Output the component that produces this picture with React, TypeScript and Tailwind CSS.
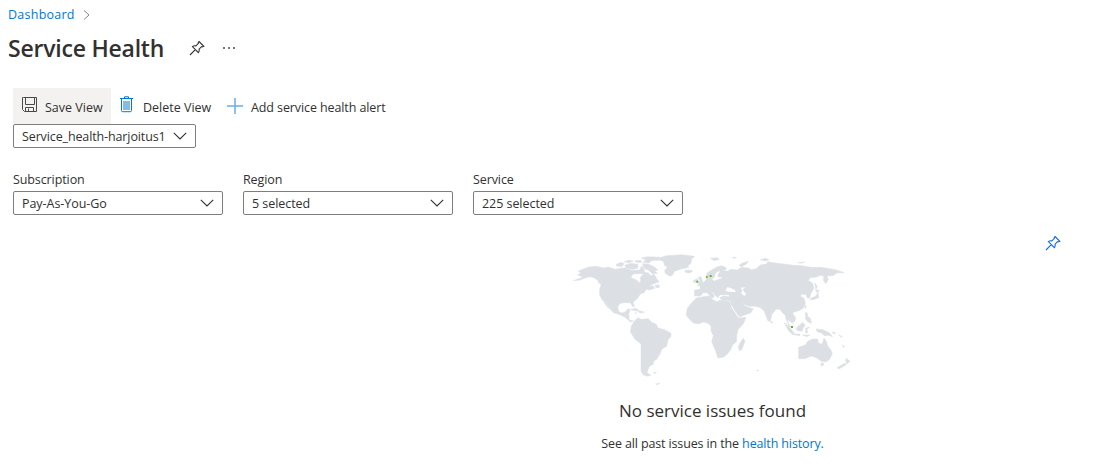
import type { ReactNode } from 'react';

function PinIcon({ className }: { className: string }) {
  return (
    <svg viewBox="0 0 16 16" className={className} fill="none" stroke="currentColor" strokeWidth="1.1">
      <path d="M10 1.5 14.8 6.3 13.4 6.9 12.6 6.6 10.1 9.1C10.5 10.5 10.2 11.7 9.4 12.6L3.4 6.6C4.3 5.8 5.5 5.5 6.9 5.9L9.4 3.4 9.2 2.6ZM6.3 9.7 1 15" />
    </svg>
  );
}

function Chevron() {
  return (
    <svg viewBox="0 0 14 8" className="h-2 w-3.5 shrink-0" fill="none" stroke="#323130" strokeWidth="1.1">
      <path d="M.8.8 7 7 13.2.8" />
    </svg>
  );
}

function SaveIcon() {
  return (
    <svg viewBox="0 0 15 15" className="h-[15px] w-[15px] shrink-0" fill="none" stroke="#4a4948">
      <path d="M1.5.5H14.5V14.5H2.5L.5 12.5V.5ZM3.5.5V7.5H12.5V.5M3.5 14.5V10.5H11.5V14.5M6.5 11.5V14" />
    </svg>
  );
}

function TrashIcon() {
  return (
    <svg viewBox="0 0 13 17" className="h-[17px] w-[13px] shrink-0" fill="none" stroke="#0078d4">
      <path d="M3 5H10V14H3Z" fill="#83bbe9" stroke="none" />
      <path d="M0 2.5H13M4.5 2.5V.8H8.5V2.5M1.5 2.5V14.5Q1.5 15.7 2.7 15.7H10.3Q11.5 15.7 11.5 14.5V2.5" />
    </svg>
  );
}

function PlusIcon() {
  return (
    <svg viewBox="0 0 16 16" className="h-4 w-4 shrink-0" stroke="#69afe5" strokeWidth="1.5">
      <path d="M8 0V16M0 8H16" />
    </svg>
  );
}

function Select({ label, children }: { label: string; children: ReactNode }) {
  return (
    <div className="w-[210px]">
      <div className="h-5 leading-[18px] tracking-[-0.1px]">{label}</div>
      <div className="flex h-6 items-center justify-between rounded-[2px] border border-[#7f7e7d] px-2">
        <span className="pt-0.5 tracking-[-0.05px]">{children}</span>
        <Chevron />
      </div>
    </div>
  );
}

function WorldMap() {
  return (
    <svg viewBox="0 0 900 450" className="h-[150px] w-[300px]" fill="#dce0e5" stroke="#dce0e5" strokeWidth="1.5">
      <path d="M25 107 45 100 54 96 38 90 47 84 40 78 57 71 72 66 95 64 115 69 130 66 150 73 178 68 200 76 224 75 230 62 240 78 222 86 204 87 198 98 215 105 222 113 227 109 226 97 235 88 235 81 250 84 258 92 267 87 276 103 283 110 262 118 252 124 264 122 270 130 253 135 243 133 239 142 226 147 218 160 205 171 208 186 202 184 197 174 180 173 165 175 158 187 162 200 172 204 182 200 187 192 196 192 191 207 192 216 193 226 207 228 196 231 182 218 165 209 145 203 136 193 123 171 112 166 104 150 104 132 108 119 100 107 87 98 75 95 60 99 45 105Z" />
      <path d="M116 164 124 174 133 191 128 187 119 175ZM98 107 107 117 101 114ZM154 58 168 52 178 56 170 65 155 63ZM179 61 197 55 219 58 218 70 202 73 184 69ZM177 50 193 45 205 49 190 53ZM210 47 229 46 228 53 212 51ZM229 39 248 35 284 37 279 44 260 47 252 54 233 52 243 45ZM233 56 250 57 269 66 278 75 269 79 278 85 262 86 250 75 237 70ZM220 80 231 77 239 83 229 88ZM270 121 281 119 284 127 273 128ZM197 194 210 190 223 196 215 198ZM220 198 232 199 238 202 224 204ZM210 203 216 204 211 205Z" />
      <path d="M268 41 292 36 305 32 350 29 389 34 380 42 378 55 368 63 372 67 345 73 329 79 321 92 313 93 300 84 299 76 307 67 298 61 296 50 286 46 272 46ZM359 78 365 75 380 76 382 80 372 84 361 82Z" />
      <path d="M207 230 218 218 230 223 250 221 260 232 274 238 279 249 299 254 318 265 318 274 309 284 305 304 291 312 286 325 275 343 266 349 265 358 252 365 249 375 246 383 258 391 248 394 234 389 228 377 228 297 210 283 196 260 199 243ZM265 382 274 382 270 386ZM272 417 285 414 278 419Z" />
      <g transform="translate(420)">
        <path d="M-25 158 10 153 18 155 21 163 36 170 46 165 75 170 79 188 91 205 100 219 123 217 116 235 99 254 95 272 95 290 83 299 78 313 68 326 57 336 39 339 31 316 20 290 25 272 18 258 18 243 8 235 -5 231 -20 237 -35 234 -50 219 -57 210 -53 190 -40 173ZM115 280 120 288 111 313 103 317 100 306 106 292Z" />
        <path d="M3 97 5 85 20 75 35 66 50 62 62 67 65 73 55 76 66 79 79 73 97 75 108 67 130 69 139 74 154 71 166 60 186 56 187 50 205 53 235 57 267 61 290 62 318 67 348 67 374 71 395 75 418 83 397 83 384 92 366 92 370 104 362 116 355 105 357 94 345 91 336 96 316 98 310 106 323 115 327 130 317 147 314 160 306 158 303 148 291 148 286 153 297 160 301 174 297 188 282 197 267 201 263 205 272 218 270 228 261 235 249 223 250 235 261 249 253 244 243 222 241 211 232 203 225 193 213 193 201 208 196 228 189 228 178 199 166 188 152 184 134 184 120 180 112 170 118 182 130 187 145 191 138 203 103 216 88 194 77 176 77 167 52 166 44 158 56 153 75 155 70 149 45 149 38 158 30 151 27 144 18 139 28 151 26 159 17 156 7 143 -5 143 -14 153 -31 153 -32 135 -15 133 -14 124 -23 120 -4 112 4 103Z" />
        <path d="M-35 106-22 101-20 111-34 113ZM-20 97-12 95-7 109-8 117-21 118-15 108ZM16 40 37 38 43 43 27 47ZM83 37 94 37 88 41ZM102 61 112 54 130 49 124 57 111 65ZM166 44 181 40 193 44 180 48ZM278 53 300 51 289 55ZM329 113 337 124 333 134ZM331 135 344 136 336 143ZM339 142 341 158 325 164 316 165 318 159 332 154ZM300 181 304 184 301 191ZM197 228 204 232 198 235ZM301 202 308 205 307 214 316 220 320 235 309 231 302 222ZM238 233 251 242 264 260 268 266 285 268 285 272 261 268 249 255ZM273 250 293 232 300 240 294 251 291 259 278 257ZM302 249 314 247 305 254 309 263 302 264ZM292 270 315 270 305 275ZM333 252 344 253 354 254 373 263 383 275 369 271 360 273 349 264 337 260ZM382 260 393 265 385 266ZM400 269 410 274 410 278ZM412 300 419 305 415 307Z" />
        <path d="M281 307 302 299 308 289 323 282 338 282 340 293 351 298 357 279 364 289 368 302 378 315 382 326 373 344 362 351 348 349 335 338 319 333 300 341 281 341ZM347 355 356 354 354 363 348 361ZM424 340 435 349 426 357 422 348ZM420 354 424 359 402 372 396 368ZM155 375 161 376 157 379Z" />
        <path fill="white" stroke="none" d="M37 80 46 79 37 90 40 97 54 98 40 103 27 107 21 103 29 96 31 86ZM61 138 67 127 78 129 92 137 91 141 74 140ZM107 128 121 127 113 134 123 147 118 153 108 145 112 138Z" />
      </g>
      <path fill="#6bb51d" stroke="none" d="M394 107H400V113H394ZM423 93H428V98H423ZM434 90H440V96H434ZM678 243H684V249H678Z" />
    </svg>
  );
}

export default function App() {
  return (
    <main className="h-[472px] w-[1101px] overflow-hidden bg-white font-['Open_Sans','Noto_Sans',sans-serif] text-[12.5px] leading-[18px] text-[#323130]">
      <nav className="flex h-[29px] items-center gap-2 pl-2 text-[#0078d4]">
        <a className="tracking-[0.25px]">Dashboard</a>
        <svg viewBox="0 0 7 10" className="h-2.5 w-[7px]" fill="none" stroke="#8a8886"><path d="m1 .5 5 4.5-5 4.5" /></svg>
      </nav>
      <header className="flex h-[38px] items-center pl-2">
        <h1 className="w-[181px] whitespace-nowrap text-[23px] font-semibold leading-[38px] tracking-[-0.22px]">Service Health</h1>
        <PinIcon className="h-4 w-4" />
        <span className="ml-[18px] flex gap-[3px]"><i className="size-0.5 bg-[#797775]" /><i className="size-0.5 bg-[#797775]" /><i className="size-0.5 bg-[#797775]" /></span>
      </header>
      <div className="mt-[21px] flex h-9 pl-[13px]">
        <div className="flex h-9 w-[98px] bg-[#f3f2f1] pl-[9px] pt-[9px]">
          <SaveIcon /><span className="ml-2 whitespace-nowrap pt-0.5">Save View</span>
        </div>
        <div className="flex w-[116px] pl-[9px] pt-2">
          <TrashIcon /><span className="ml-2.5 whitespace-nowrap pt-[3px]">Delete View</span>
        </div>
        <div className="flex pt-2.5">
          <PlusIcon /><span className="ml-2 whitespace-nowrap pt-px tracking-[-0.1px]">Add service health alert</span>
        </div>
      </div>
      <div className="ml-[13px] flex h-6 w-[183px] items-center justify-between rounded-[2px] border border-[#7f7e7d] px-2">
        <span className="pt-0.5 tracking-[-0.12px]">Service_health-harjoitus1</span><Chevron />
      </div>
      <section className="mt-[23px] flex gap-5 pl-[13px]">
        <Select label="Subscription">Pay-As-You-Go</Select>
        <Select label="Region">5 selected</Select>
        <Select label="Service">225 selected</Select>
      </section>
      <div className="flex h-[30px] justify-end pr-10 pt-5 text-[#0f6cdb]"><PinIcon className="h-4 w-4 shrink-0" /></div>
      <section className="ml-[565px] flex w-[300px] flex-col items-center">
        <WorldMap />
        <h2 className="mr-[5px] mt-1 whitespace-nowrap text-[17px] leading-6">No service issues found</h2>
        <p className="mr-[5px] mt-3 whitespace-nowrap tracking-[-0.13px]">See all past issues in the <a className="text-[#0078d4]">health history.</a></p>
      </section>
    </main>
  );
}
